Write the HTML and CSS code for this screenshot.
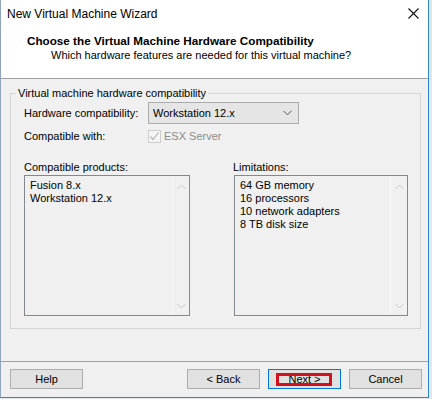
FILE: index.html
```html
<!DOCTYPE html>
<html lang="en">
<head>
    <meta charset="UTF-8">
    <title>New Virtual Machine Wizard</title>
    <link rel="stylesheet" href="styles.css">
</head>
<body>
    <div class="window">
        <!-- Title bar -->
        <div class="titlebar">
            <div class="title">New Virtual Machine Wizard</div>
            <svg class="close" width="11" height="11" viewBox="0 0 11 11">
                <path d="M0.5 0.5 L10.5 10.5 M10.5 0.5 L0.5 10.5" stroke="#111" stroke-width="1.1" fill="none"/>
            </svg>
        </div>

        <!-- Header -->
        <div class="header">
            <div class="header-title">Choose the Virtual Machine Hardware Compatibility</div>
            <div class="header-sub">Which hardware features are needed for this virtual machine?</div>
        </div>

        <!-- Content -->
        <div class="content">
            <fieldset class="group">
                <legend>Virtual machine hardware compatibility</legend>
                <div class="form-row">
                    <div class="form-label">Hardware compatibility:</div>
                    <div class="select">
                        <span>Workstation 12.x</span>
                        <svg width="9" height="6" viewBox="0 0 9 6">
                            <path d="M0.5 0.8 L4.5 4.8 L8.5 0.8" stroke="#555" fill="none"/>
                        </svg>
                    </div>
                </div>
                <div class="form-row small">
                    <div class="form-label">Compatible with:</div>
                    <div class="check disabled">
                        <span class="check-box">
                            <svg width="11" height="11" viewBox="0 0 11 11">
                                <path d="M1.5 5.5 L4 8.5 L9.5 1.5" stroke="#b4b4b4" stroke-width="1.2" fill="none"/>
                            </svg>
                        </span>
                        <span>ESX Server</span>
                    </div>
                </div>

                <div class="lists">
                    <div class="list-col">
                        <div class="list-label">Compatible products:</div>
                        <div class="listbox">
                            <div class="list-items">
                                <div>Fusion 8.x</div>
                                <div>Workstation 12.x</div>
                            </div>
                            <div class="scroll">
                                <svg width="9" height="6" viewBox="0 0 9 6"><path d="M0.5 5 L4.5 1 L8.5 5" stroke="#c8c8c8" fill="none"/></svg>
                                <svg width="9" height="6" viewBox="0 0 9 6"><path d="M0.5 1 L4.5 5 L8.5 1" stroke="#c8c8c8" fill="none"/></svg>
                            </div>
                        </div>
                    </div>
                    <div class="list-col right">
                        <div class="list-label">Limitations:</div>
                        <div class="listbox">
                            <div class="list-items">
                                <div>64 GB memory</div>
                                <div>16 processors</div>
                                <div>10 network adapters</div>
                                <div>8 TB disk size</div>
                            </div>
                            <div class="scroll">
                                <svg width="9" height="6" viewBox="0 0 9 6"><path d="M0.5 5 L4.5 1 L8.5 5" stroke="#c8c8c8" fill="none"/></svg>
                                <svg width="9" height="6" viewBox="0 0 9 6"><path d="M0.5 1 L4.5 5 L8.5 1" stroke="#c8c8c8" fill="none"/></svg>
                            </div>
                        </div>
                    </div>
                </div>
            </fieldset>
        </div>

        <!-- Buttons -->
        <div class="footer">
            <button class="btn">Help</button>
            <div class="spacer"></div>
            <button class="btn">&lt; Back</button>
            <button class="btn focused">Next &gt;<span class="mark"></span></button>
            <button class="btn">Cancel</button>
        </div>
    </div>
</body>
</html>
```

FILE: styles.css
```css
* { margin: 0; padding: 0; box-sizing: border-box; }
body { background: #dfe6ec; font-family: "Liberation Sans", Arial, sans-serif; font-size: 11px; color: #000; }

.window { width: 429px; height: 398px; background: #f0f0f0; border-left: 1px solid #8ea6bd; border-right: 1px solid #2e86cf; border-bottom: 1px solid #2e86cf; display: flex; flex-direction: column; }

.titlebar { height: 27px; background: #fff; display: flex; align-items: center; justify-content: space-between; padding: 0 9px 0 6px; }
.title { font-size: 12px; }
.close { display: block; }

.header { height: 52px; background: #fff; border-bottom: 1px solid #a0a0a0; padding: 6px 0 0 26px; }
.header-title { font-weight: bold; font-size: 11.7px; line-height: 15px; }
.header-sub { margin-left: 24px; line-height: 15px; }

.content { height: 283px; border-bottom: 1px solid #a0a0a0; }

.group { margin: 7px 7px 0 9px; border: 1px solid #d5d5d5; padding: 2px 12px 12px 13px; }
.group legend { margin-left: -8px; padding: 0 2px; line-height: 14px; }

.form-row { display: flex; align-items: center; height: 21px; }
.form-row.small { height: 14px; margin-top: 6px; }
.form-label { width: 124px; }

.select { width: 151px; height: 22px; background: #e5e5e5; border: 1px solid #acacac; display: flex; align-items: center; justify-content: space-between; padding: 0 6px 0 4px; }

.check { display: flex; align-items: center; gap: 3px; }
.check.disabled { color: #8c8c8c; }
.check-box { width: 13px; height: 13px; border: 1px solid #cdcdcd; background: #f4f4f4; display: flex; align-items: center; justify-content: center; }

.lists { display: flex; justify-content: space-between; margin-top: 17px; }
.list-col { width: 166px; }
.list-col.right { width: 175px; }
.list-col.right .listbox { margin-left: 1px; }
.list-label { line-height: 14px; margin-bottom: 1px; }

.listbox { height: 141px; border: 1px solid #828790; display: flex; }
.list-items { flex: 1; padding: 3px 0 0 5px; line-height: 13px; }
.scroll { width: 17px; border-left: 1px solid #f8f8f8; display: flex; flex-direction: column; justify-content: space-between; align-items: center; padding: 8px 0 6px; }
.scroll svg { display: block; }

.footer { flex: 1; display: flex; align-items: flex-start; padding: 7px 6px 0 9px; gap: 8px; }
.spacer { flex: 1; }
.btn { position: relative; width: 73px; height: 20px; background: #e1e1e1; border: 1px solid #adadad; font-family: inherit; font-size: 11px; color: #000; }
.btn.focused { border-color: #0078d7; }
.mark { position: absolute; left: 7px; top: 3px; width: 56px; height: 13px; border: 3px solid #d2101e; }
```
